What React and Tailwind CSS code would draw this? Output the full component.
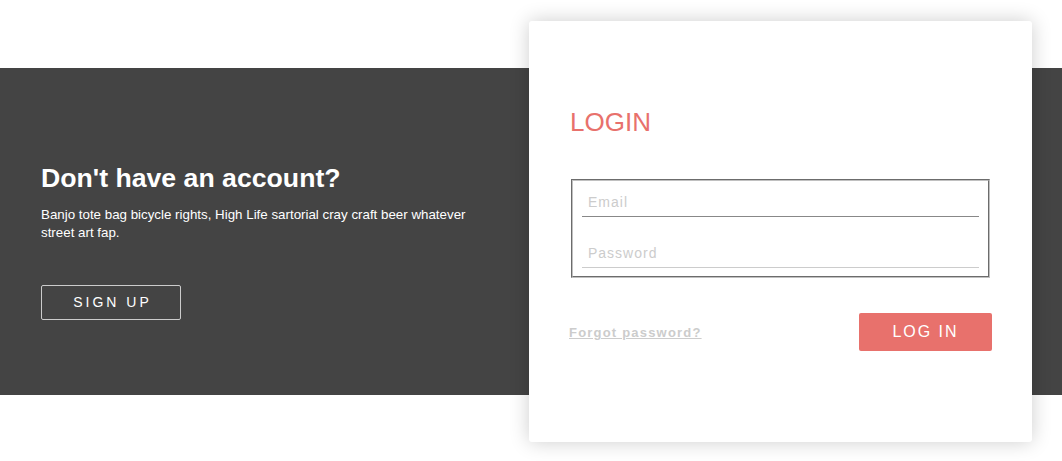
export default function App() {
  return (
    <div className="w-[1062px] h-[461px] bg-white pt-[68px] font-['Liberation_Sans',Arial,sans-serif] overflow-hidden">
      <div className="h-[327px] bg-[#444444] flex items-center">
        <div className="w-[529px] self-start pl-[41px] pt-[95px] text-white">
          <h2 className="text-[26.67px] font-bold leading-[31px]">Don't have an account?</h2>
          <p className="mt-[12px] text-[13.33px] leading-[18px] pr-[40px]">
            Banjo tote bag bicycle rights, High Life sartorial cray craft beer whatever street art fap.
          </p>
          <button className="mt-[43px] w-[140px] h-[35px] border border-[#cccccc] rounded-[2px] text-[14px] tracking-[3px] pl-[3px] text-white">
            SIGN UP
          </button>
        </div>
        <div className="w-[503px] h-[421px] shrink-0 bg-white rounded-[3px] shadow-[0_0_20px_rgba(0,0,0,0.2)] pt-[86px] pl-[41px] pr-[40px]">
          <h2 className="text-[26px] leading-[30px] text-[#e8716c] font-normal">LOGIN</h2>
          <fieldset className="mt-[42px] ml-[1px] w-[419px] border-2 [border-style:groove] border-[#c0c0c0] pt-[6px] pb-[8px] px-[9px]">
            <input
              type="text"
              placeholder="Email"
              className="block w-full h-[30px] border-b border-[#888888] pl-[6px] text-[14px] tracking-[1px] outline-none placeholder:text-[#cccccc]"
            />
            <input
              type="password"
              placeholder="Password"
              className="block w-full h-[30px] mt-[21px] border-b border-[#cccccc] pl-[6px] text-[14px] tracking-[1px] outline-none placeholder:text-[#cccccc]"
            />
          </fieldset>
          <div className="mt-[35px] -ml-[1px] flex items-center justify-between w-[423px]">
            <a href="#" className="text-[13px] font-bold text-[#cccccc] underline tracking-[1.2px] pt-[2px]">
              Forgot password?
            </a>
            <button className="w-[133px] h-[38px] bg-[#e8716c] rounded-[2px] text-white text-[16px] tracking-[2px]">
              LOG IN
            </button>
          </div>
        </div>
      </div>
    </div>
  );
}
